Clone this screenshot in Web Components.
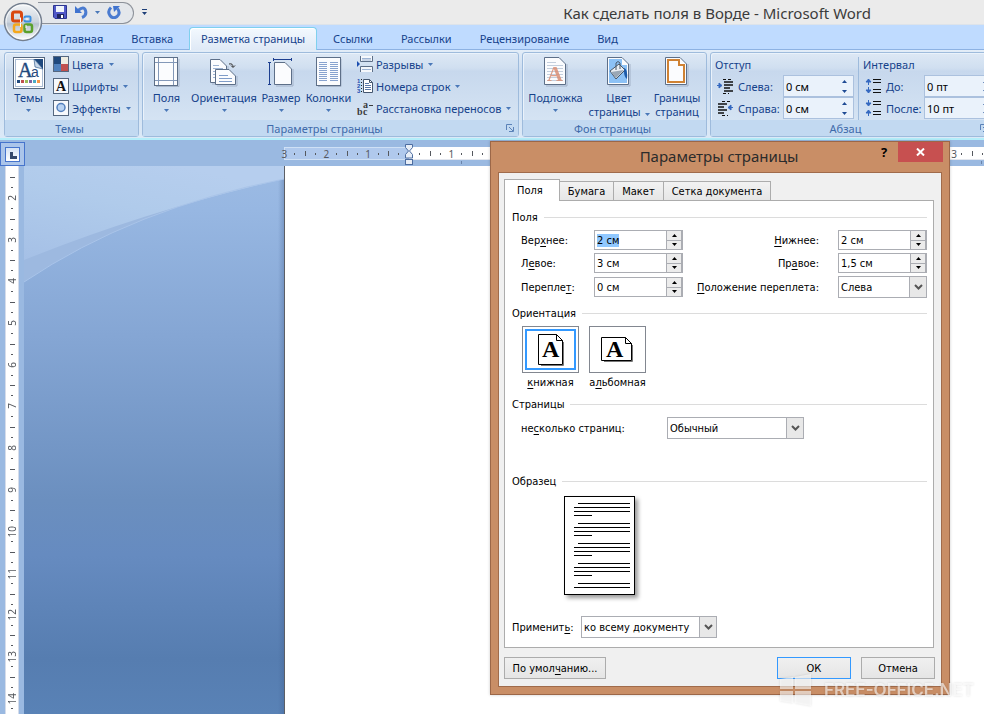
<!DOCTYPE html>
<html lang="ru">
<head>
<meta charset="utf-8">
<title>Как сделать поля в Ворде - Microsoft Word</title>
<style>
    html, body {
        margin: 0;
        height: 100%;
    }
    body {
        overflow: hidden;
        font-family: "Noto Sans", "Open Sans", sans-serif;
        font-size: 11px;
        color: #15428b;
    }
</style>
</head>
<body>
<word-window></word-window>

<script>
// ---------- icons ----------
const doc = (w, h, extra) => `
    <path d="M${w + 1} 7V${h + 1}H2" fill="none" stroke="#8d9bb0" opacity=".6"/>
    <path d="M.5.5H${w - 7}L${w - .5} 7V${h - .5}H.5Z" fill="#fbfcfe" stroke="#5d6f88"/>
    <path d="M${w - 7}.5V7H${w - .5}" fill="#dce6f3" stroke="#5d6f88"/>${extra}`;

const icons = {
    themes: `<svg width="32" height="32"><rect x=".5" y=".5" width="31" height="31" fill="#fff" stroke="#55677f"/>
        <rect x="2.500" y="2.500" width="27" height="27" fill="#fff" stroke="#a9bbd3"/>
        <path d="M21 2h9v10z" fill="#1f497d"/><path d="M21 2l1 8 8 2z" fill="#c9d8ea" stroke="#1f497d" stroke-width=".6"/>
        <text x="5" y="20" font-family="Liberation Serif" font-size="20" fill="#1f497d" stroke="#1f497d" stroke-width=".4">A</text>
        <text x="18" y="20" font-family="Liberation Sans" font-size="14" fill="#1f497d">a</text>
        <g><path d="M4 23h3v3H4z" fill="#1f497d"/><path d="M8 23h3v3H8z" fill="#c0504d"/><path d="M12 23h3v3h-3z" fill="#9bbb59"/>
        <path d="M16 23h3v3h-3z" fill="#8064a2"/><path d="M20 23h3v3h-3z" fill="#4bacc6"/><path d="M24 23h3v3h-3z" fill="#f79646"/></g></svg>`,
    colors: `<svg width="16" height="16"><rect x=".5" y=".5" width="15" height="15" fill="#fff" stroke="#55677f"/>
        <path d="M1 1h7v7H1z" fill="#1f497d"/><path d="M8 1h7v7H8z" fill="#eeece1"/><path d="M1 8h7v7H1z" fill="#4f81bd"/><path d="M8 8h7v7H8z" fill="#c0504d"/></svg>`,
    fonts: `<svg width="16" height="16"><rect x=".5" y=".5" width="15" height="15" fill="#f7f9fc" stroke="#55677f"/>
        <text x="3" y="13" font-family="Liberation Serif" font-size="14" font-weight="bold" fill="#111">A</text></svg>`,
    effects: `<svg width="16" height="16"><rect x=".5" y=".5" width="15" height="15" fill="#f7f9fc" stroke="#55677f"/>
        <circle cx="8" cy="7.500" r="4" fill="#b9d3f3" stroke="#5480bd" stroke-width="1.500"/></svg>`,
    margins: `<svg width="26" height="30"><path d="M2 29.500h23V2" fill="none" stroke="#8d9bb0" opacity=".6"/>
        <rect x=".5" y=".5" width="23" height="28" fill="#fbfcfe" stroke="#5d6f88"/>
        <path d="M4.500 1v27M19.500 1v27M1 5.500h22M1 23.500h22" stroke="#8398b8" fill="none"/></svg>`,
    orientation: `<svg width="30" height="32"><g transform="translate(1 2)">${doc(17, 24, '<path d="M3 6.500h6M3 9.500h10M3 12.500h8M3 15.500h6M3 18.500h6" stroke="#9db3d3"/>')}</g>
        <g transform="translate(6 12)">${doc(21, 16, '<path d="M4 6.500h9M4 9.500h13M4 12.500h13" stroke="#7f9cc8"/>')}</g>
        <path d="M20 7q4-1 4 3m-2-1.500l2 2 2-2" fill="none" stroke="#333"/></svg>`,
    size: `<svg width="26" height="30"><path d="M5.500 2.500h18M5.500 1v3M23.500 1v3" stroke="#1d3f8f" fill="none"/>
        <path d="M1.500 5.500v22M0 5.500h3M0 27.500h3" stroke="#1d3f8f" fill="none"/><g transform="translate(6 5)">${doc(18, 23, '')}</g></svg>`,
    columns: `<svg width="26" height="30"><path d="M2 29.500h23V2" fill="none" stroke="#8d9bb0" opacity=".6"/>
        <rect x=".5" y=".5" width="24" height="28" fill="#fbfcfe" stroke="#5d6f88"/>
        <path d="M3 5.500h8M3 7.500h8M3 9.500h8M3 11.500h8M3 13.500h8M3 15.500h8M3 17.500h8M3 19.500h8M3 21.500h8M3 23.500h8M14 5.500h8M14 7.500h8M14 9.500h8M14 11.500h8M14 13.500h8M14 15.500h8M14 17.500h8M14 19.500h8M14 21.500h8M14 23.500h8" stroke="#88a3cf"/></svg>`,
    breaks: `<svg width="17" height="17"><path d="M3.500 0v5.500h12V0M3.500 16v-5.500h12V16" fill="#f5f8fc" stroke="#5d6f88"/>
        <path d="M5 2.500h9M5 4h9M5 13.500h9" stroke="#9db3d3"/><path d="M0 5l3 3-3 3z" fill="#1d4fb0"/></svg>`,
    lines: `<svg width="17" height="17"><g font-family="Liberation Sans" font-size="6" font-weight="bold" fill="#1d4fb0"><text x="0" y="5">1</text><text x="0" y="10">2</text><text x="0" y="15">3</text></g>
        <path d="M4.500 1v14" stroke="#222" stroke-dasharray="1 2"/><path d="M6.500 1.500h6l3 3V14.500H6.500z" fill="#fff" stroke="#44566f"/><path d="M12.500 1.500v3h3" fill="none" stroke="#44566f"/>
        <path d="M8 5.500h4M8 7.500h6M8 9.500h6M8 11.500h6" stroke="#5a78a8"/></svg>`,
    hyphen: `<svg width="17" height="17"><g font-family="Liberation Serif" font-weight="bold" font-size="10" fill="#3b3b3b"><text x="0" y="15">b</text><text x="6" y="15">c</text><text x="6" y="8">a</text></g><path d="M12 5.500h4" stroke="#3b3b3b"/></svg>`,
    watermark: `<svg width="24" height="30">${doc(22, 28, `<path d="M3 5.500h9M3 8.500h16M3 11.500h16M3 14.500h16M3 17.500h16M3 20.500h16M3 23.500h16" stroke="#c3cedd"/>
        <text x="3" y="24" font-family="Liberation Serif" font-size="22" font-weight="bold" fill="#d98f76" opacity=".85">A</text>`)}</svg>`,
    pagecolor: `<svg width="24" height="30">${doc(22, 28, '<path d="M2 2h13v6h5v18H2z" fill="#8cc1f5"/>')}
        <path d="M3 14l9-7 6 6-9 9z" fill="#e9edf2" stroke="#4a5868"/><path d="M4 15l13-2-8 8z" fill="#9aa7b5"/><path d="M9 13V6q2-3 4 0v6" fill="none" stroke="#4a5868"/>
        <path d="M17 11q4 1 3 11-3-2-3-8z" fill="#1d5aa8"/></svg>`,
    borders: `<svg width="24" height="30">${doc(22, 28, '<path d="M3 3h11v5h5v17H3z" fill="none" stroke="#cf8234" stroke-width="2"/>')}</svg>`,
    left: `<svg width="17" height="15"><path d="M6 .5h3M11 .5h3M6 14.500h3M11 14.500h1" stroke="#111"/><path d="M7 3h9M7 6h9M7 9h6M7 12h9" stroke="#111" stroke-width="1.500"/><path d="M0 6.500h4M2 4l3 2.500L2 9z" stroke="#3569c0" fill="#3569c0"/></svg>`,
    right: `<svg width="17" height="15"><path d="M5 .5h3M10 .5h3M5 14.500h3M10 14.500h1" stroke="#111"/><path d="M1 3h9M1 6h6M1 9h9M1 12h6" stroke="#111" stroke-width="1.500"/><path d="M16 6.500h-4M14 4l-3 2.500L14 9z" stroke="#3569c0" fill="#3569c0"/></svg>`,
    before: `<svg width="17" height="17"><path d="M8 1.500h8M8 4.500h8M8 11.500h8M8 14.500h8" stroke="#111"/><path d="M3.500 1v6M1 4l2.500-3L6 4zM3.500 9v6M1 12l2.500 3L6 12z" stroke="#3569c0" fill="#3569c0"/></svg>`,
    after: `<svg width="17" height="17"><path d="M8 1.500h8M8 4.500h8M8 11.500h8M8 14.500h8" stroke="#111"/><path d="M3.500 0v5M1 3l2.500 3L6 3zM3.500 11v5M1 13l2.500-3L6 13z" stroke="#3569c0" fill="#3569c0"/></svg>`,
    portrait: `<svg width="27" height="33"><g transform="translate(1 1)"><path d="M25.500 8v23.500H3" fill="none" stroke="#777"/><path d="M.5.500h18l6 6v24H.5z" fill="#fff" stroke="#000"/><path d="M18.500.500v6h6z" fill="#fff" stroke="#000"/>
        <text x="4" y="23" font-family="Liberation Serif" font-size="24" font-weight="bold" fill="#000">A</text></g></svg>`,
    landscape: `<svg width="33" height="26"><path d="M31.500 8v16.500H3" fill="none" stroke="#777"/><path d="M.5.500h24l6 6v17H.5z" fill="#fff" stroke="#000"/><path d="M24.500.500v6h6z" fill="#fff" stroke="#000"/>
        <text x="5" y="20" font-family="Liberation Serif" font-size="24" font-weight="bold" fill="#000">A</text></svg>`,
    office: `<svg width="42" height="42"><defs><linearGradient id="ball" x2="0" y2="1"><stop stop-color="#f4f6f8"/><stop offset=".5" stop-color="#cbd3dd"/><stop offset=".55" stop-color="#b7c2cf"/><stop offset="1" stop-color="#fff"/></linearGradient></defs>
        <circle cx="21" cy="21" r="18.500" fill="url(#ball)" stroke="#747f8f" stroke-width="1.500"/><circle cx="21" cy="21" r="17" fill="none" stroke="#fff" opacity=".8"/>
        <g fill="none" stroke-linejoin="round"><rect x="10.500" y="11" width="9" height="9" rx="2" stroke="#d9480f" stroke-width="3"/><rect x="22.500" y="15.500" width="6" height="5" rx="1" stroke="#3d8fe0" stroke-width="2"/>
        <rect x="12" y="23.500" width="7.500" height="7.500" rx="2" stroke="#f5a81c" stroke-width="2.500"/><rect x="22.500" y="23.500" width="7.500" height="7.500" rx="2" stroke="#5aa02c" stroke-width="2.500"/></g>
        <path d="M18.500 16.500v5M22 18h4M18.500 22v4M24 24v3" fill="none" stroke="#fff"/></svg>`,
    save: `<svg width="14" height="14"><path d="M.5.5h13v13H2l-1.500-1.500z" fill="#5058c8" stroke="#2b3590"/><path d="M3 1h8v6H3z" fill="#eef3fb"/><path d="M4 9h7v4H4z" fill="#20265e"/><path d="M8 10h2v3H8z" fill="#fff"/></svg>`,
    undo: `<svg width="14" height="14"><path d="M4 5.500q6-5 7.500 0T8 12.500" fill="none" stroke="#4a7bd0" stroke-width="3"/><path d="M1 1v7h7z" fill="#3f73cf"/></svg>`,
    redo: `<svg width="14" height="14"><path d="M4 2.500q-4 4-1 8t7 1 .5-8" fill="none" stroke="#4a7bd0" stroke-width="3"/><path d="M6 1h7L7 7z" fill="#3f73cf"/></svg>`,
    caret: `<svg width="5" height="3"><path d="M0 0h5L2.500 3z" fill="#4a78b8"/></svg>`,
    more: `<svg width="5" height="6"><path d="M0 0h5v1H0zM0 3h5L2.500 6z" fill="#1e3f78"/></svg>`,
    launcher: `<svg width="8" height="8"><path d="M.5 6V.5H6M3 3l4 4M7.500 3v4.500H3" fill="none" stroke="#5b82b8"/></svg>`,
    chevron: `<svg width="9" height="6"><path d="M1 1l3.500 3.500L8 1" fill="none" stroke="#555" stroke-width="2"/></svg>`,
    up: `<svg width="5" height="3"><path d="M2.500 0L5 3H0z" fill="currentColor"/></svg>`,
    down: `<svg width="5" height="3"><path d="M0 0h5L2.500 3z" fill="currentColor"/></svg>`
};

// ---------- base ----------
class BaseElement extends HTMLElement {
    constructor() {
        super();
        this.attachShadow({mode: "open"});
    }
    attr(name) {
        return this.getAttribute(name) || "";
    }
    getTemplate() {
        const template = document.createElement("template");
        template.innerHTML = `<style>
            * { box-sizing: border-box; }
            button, input, select { font: inherit; color: inherit; margin: 0; padding: 0; border: 0; background: none; border-radius: 0; outline: none; }
            svg { display: block; flex: none; }
            ${this.getStyles()}
        </style>${this.getMarkup()}`;
        return template;
    }
    connectedCallback() {
        this.shadowRoot.appendChild(this.getTemplate().content.cloneNode(true));
    }
}

// ---------- ribbon parts ----------
class RibbonGroup extends BaseElement {
    getStyles() {
        return `
            :host {
                display: flex;
                flex-direction: column;
                border: 1px solid #9ebbdc;
                border-radius: 3px;
                background: linear-gradient(#dde8f5, #d0dff0 18%, #c7d8ed 22%, #d9e7f5);
                box-shadow: inset 1px 1px 0 #eaf2fb;
            }
            .items { display: flex; flex: 1; }
            .caption {
                display: flex;
                height: 16px;
                align-items: center;
                background: #c2d9f1;
                color: #3e6aaa;
                padding-right: 4px;
            }
            .caption span { flex: 1; text-align: center; }
        `;
    }
    getMarkup() {
        return `
            <div class="items"><slot></slot></div>
            <div class="caption"><span>${this.attr("caption")}</span>
            ${this.hasAttribute("launcher") ? `<button aria-label="Открыть окно">${icons.launcher}</button>` : ""}</div>
        `;
    }
}
customElements.define("ribbon-group", RibbonGroup);

class RibbonButton extends BaseElement {
    getStyles() {
        return `
            :host { display: block; }
            button {
                display: flex;
                flex-direction: column;
                align-items: center;
                width: 100%;
                padding-top: 4px;
                line-height: 14px;
            }
            .icon { display: flex; height: 34px; align-items: flex-start; }
            .text { white-space: nowrap; }
            .arrow { display: flex; height: 10px; align-items: center; }
            .arrow.inline { display: inline-flex; margin-left: 4px; height: 8px; }
        `;
    }
    getMarkup() {
        const second = this.attr("second");
        const arrow = !this.hasAttribute("plain");
        return `
            <button>
                <span class="icon">${icons[this.attr("icon")]}</span>
                <span class="text">${this.attr("label")}</span>
                ${second ? `<span class="text">${second}${arrow ? `<span class="arrow inline">${icons.caret}</span>` : ""}</span>`
                    : `<span class="arrow">${icons.caret}</span>`}
            </button>
        `;
    }
}
customElements.define("ribbon-button", RibbonButton);

class RibbonItem extends BaseElement {
    getStyles() {
        return `
            :host { display: block; }
            button { display: flex; align-items: center; height: 22px; white-space: nowrap; }
            .icon { width: 19px; }
            .text { margin-right: 5px; }
        `;
    }
    getMarkup() {
        return `<button><span class="icon">${icons[this.attr("icon")]}</span><span class="text">${this.attr("label")}</span>${icons.caret}</button>`;
    }
}
customElements.define("ribbon-item", RibbonItem);

class RibbonSpin extends BaseElement {
    getStyles() {
        return `
            :host { display: flex; height: 22px; align-items: center; }
            .icon { width: 23px; padding-left: 2px; }
            label { width: var(--label-width, 45px); }
            .box {
                display: flex;
                width: 71px;
                height: 22px;
                border: 1px solid #abc1de;
                background: #eaf2fb;
                color: #000;
            }
            input { flex: 1; min-width: 0; padding-left: 2px; }
            .arrows { display: flex; flex-direction: column; width: 17px; color: #1e4a94; }
            .arrows button { flex: 1; display: flex; align-items: center; justify-content: center; }
        `;
    }
    getMarkup() {
        return `
            <span class="icon">${icons[this.attr("icon")]}</span>
            <label for="value">${this.attr("label")}</label>
            <span class="box">
                <input id="value" value="${this.attr("value")}">
                <span class="arrows"><button aria-label="Больше">${icons.up}</button><button aria-label="Меньше">${icons.down}</button></span>
            </span>
        `;
    }
}
customElements.define("ribbon-spin", RibbonSpin);

// ---------- top of the window ----------
class WordHeader extends BaseElement {
    getStyles() {
        return `
            :host { display: block; position: relative; }
            .title {
                display: flex;
                align-items: center;
                height: 25px;
                background: #ebebeb;
                border-bottom: 1px solid #dde3ea;
            }
            .quick {
                display: flex;
                align-items: center;
                height: 22px;
                margin: 2px 0 0 38px;
                padding: 0 12px 2px 15px;
                gap: 7px;
                border: 1px solid #8c9199;
                border-left: 0;
                border-radius: 0 11px 11px 0;
                background: #e4e7eb;
            }
            .more { margin-left: 8px; }
            h1 {
                flex: 1;
                margin: 0;
                padding: 2px 113px 0 0;
                text-align: right;
                font-size: 15px;
                line-height: 20px;
                font-weight: normal;
                color: #3b3b3b;
                white-space: nowrap;
            }
            .orb { position: absolute; left: 2px; top: 1px; z-index: 1; }
            nav {
                display: flex;
                gap: 4px;
                height: 25px;
                padding: 2px 0 0 48px;
                background: #bfdbff;
                border-bottom: 1px solid #8db2e3;
            }
            nav button { padding: 0 11px 1px; border: 1px solid transparent; border-bottom: 0; height: 23px; white-space: nowrap; }
            nav button[aria-selected=true] {
                border-color: #7fd0ee;
                border-radius: 4px 4px 0 0;
                background: linear-gradient(#f3f9fe, #dfe9f6);
                box-shadow: inset 1px 1px #fff;
            }
        `;
    }
    getMarkup() {
        const tabs = ["Главная", "Вставка", "Разметка страницы", "Ссылки", "Рассылки", "Рецензирование", "Вид"];
        return `
            <button class="orb" aria-label="Office">${icons.office}</button>
            <div class="title">
                <div class="quick">
                    <button aria-label="Сохранить">${icons.save}</button>
                    <button aria-label="Отменить">${icons.undo}</button>
                    <button aria-label="Список отмены">${icons.caret}</button>
                    <button aria-label="Повторить">${icons.redo}</button>
                </div>
                <button class="more" aria-label="Настройка панели">${icons.more}</button>
                <h1>Как сделать поля в Ворде - Microsoft Word</h1>
            </div>
            <nav role="tablist">
                ${tabs.map((tab, i) => `<button role="tab" aria-selected="${i === 2}">${tab}</button>`).join("")}
            </nav>
        `;
    }
}
customElements.define("word-header", WordHeader);

class WordRibbon extends BaseElement {
    getStyles() {
        return `
            :host {
                display: flex;
                gap: 3px;
                height: 90px;
                padding: 2px 0 1px 4px;
                overflow: hidden;
                background: linear-gradient(#e3edf8, #cbdcf0 25%, #dbe9f7);
                border-bottom: 2px solid #b4eefa;
            }
            ribbon-group { flex: none; }
            .themes { width: 135px; }
            .setup { width: 377px; }
            .back { width: 185px; }
            .para { width: 283px; }
            .themes .list { padding-left: 1px; }
            .setup .list { padding-left: 4px; }
            .para-col h2 { margin: 0; height: 22px; line-height: 23px; font-size: 11px; font-weight: normal; }
            .indent { padding-left: 4px; }
            .spacing { --label-width: 38px; margin-top: 4px; padding-left: 4px; margin-left: 4px; border-left: 1px solid #9ebbdc; }
            .spacing h2 { height: 18px; line-height: 15px; }
        `;
    }
    getMarkup() {
        return `
            <ribbon-group class="themes" caption="Темы">
                <ribbon-button icon="themes" label="Темы" style="width:47px"></ribbon-button>
                <div class="list">
                    <ribbon-item icon="colors" label="Цвета"></ribbon-item>
                    <ribbon-item icon="fonts" label="Шрифты"></ribbon-item>
                    <ribbon-item icon="effects" label="Эффекты"></ribbon-item>
                </div>
            </ribbon-group>
            <ribbon-group class="setup" caption="Параметры страницы" launcher>
                <ribbon-button icon="margins" label="Поля" style="width:47px"></ribbon-button>
                <ribbon-button icon="orientation" label="Ориентация" style="width:68px"></ribbon-button>
                <ribbon-button icon="size" label="Размер" style="width:46px"></ribbon-button>
                <ribbon-button icon="columns" label="Колонки" style="width:49px"></ribbon-button>
                <div class="list">
                    <ribbon-item icon="breaks" label="Разрывы"></ribbon-item>
                    <ribbon-item icon="lines" label="Номера строк"></ribbon-item>
                    <ribbon-item icon="hyphen" label="Расстановка переносов"></ribbon-item>
                </div>
            </ribbon-group>
            <ribbon-group class="back" caption="Фон страницы">
                <ribbon-button icon="watermark" label="Подложка" style="width:65px"></ribbon-button>
                <ribbon-button icon="pagecolor" label="Цвет" second="страницы" style="width:62px"></ribbon-button>
                <ribbon-button icon="borders" label="Границы" second="страниц" plain style="width:54px"></ribbon-button>
            </ribbon-group>
            <ribbon-group class="para" caption="Абзац" launcher>
                <div class="para-col indent">
                    <h2>Отступ</h2>
                    <ribbon-spin icon="left" label="Слева:" value="0 см"></ribbon-spin>
                    <ribbon-spin icon="right" label="Справа:" value="0 см"></ribbon-spin>
                </div>
                <div class="para-col spacing">
                    <h2>Интервал</h2>
                    <ribbon-spin icon="before" label="До:" value="0 пт"></ribbon-spin>
                    <ribbon-spin icon="after" label="После:" value="10 пт"></ribbon-spin>
                </div>
            </ribbon-group>
        `;
    }
}
customElements.define("word-ribbon", WordRibbon);

// ---------- rulers ----------
// every centimetre is one cell: number, dot, half mark, dot
const rulerCells = numbers => numbers.map(n => `<div class="cell"><b>${n}</b><i></i><s></s><i></i></div>`).join("");

class RulerTop extends BaseElement {
    getStyles() {
        return `
            :host { display: flex; height: 25px; background: #9ab9e1; color: #55585e; font-size: 10px; }
            .corner {
                width: 25px;
                height: 24px;
                border: 1px solid #4674cc;
                background: #abc5ea;
                display: grid;
                place-items: center;
                margin-top: 1px;
            }
            .corner svg { border: 1px solid #4674cc; background: linear-gradient(#d5e2f4, #fff); }
            .track { flex: 1; min-width: 0; overflow: hidden; display: grid; grid-template: 19px 6px / 1fr; }
            .band, .cells { grid-area: 1 / 1; display: flex; align-self: end; height: 13px; }
            .band { margin-left: 259px; }
            .outside { flex: 0 0 125px; background: #b0c9ed; border: 1px solid #cfe0f5; border-right: 0; }
            .inside { flex: 1; background: #fff; border-bottom: 1px solid #e2e6ee; }
            .cells { margin-left: 254px; overflow: hidden; }
            .cell { flex: 0 0 42px; display: grid; grid-template-columns: repeat(4, minmax(0, 1fr)); place-items: center; }
            .cell:nth-child(3n) { flex-basis: 41px; }
            .cell b { font-weight: normal; line-height: 12px; }
            .cell i { width: 1px; height: 2px; background: #55585e; }
            .cell s { width: 1px; height: 5px; background: #55585e; }
            .marker { grid-area: 1 / 1 / 3 / 2; margin: 2px 0 0 379px; }
            .stops { grid-area: 2 / 1; margin-left: 385px; height: 3px; margin-top: 1px;
                background: repeating-linear-gradient(90deg, transparent 0 51px, #6a84ab 51px 52px); }
        `;
    }
    getMarkup() {
        // the dialog covers the marks from 2 to 12
        const covered = Array(11).fill("");
        return `
            <button class="corner" aria-label="Табуляция"><svg width="15" height="15"><path d="M4 4h3v4h4v3H4z" fill="#34486b"/></svg></button>
            <div class="track">
                <div class="band"><div class="outside"></div><div class="inside"></div></div>
                <div class="cells">${rulerCells([3, 2, 1, "", 1, ...covered, 13])}</div>
                <div class="stops"></div>
                <svg class="marker" width="10" height="23"><path d="M1.500 1.500h7v3L5.500 8l3 3.500V15h-7v-3.500l3-3.500-3-3.500z" fill="#e8eef7" stroke="#4d6da0"/><rect x="1.500" y="16.500" width="7" height="5" fill="#e8eef7" stroke="#4d6da0"/></svg>
            </div>
        `;
    }
}
customElements.define("ruler-top", RulerTop);

class RulerSide extends BaseElement {
    getStyles() {
        return `
            :host {
                flex: 0 0 24px;
                overflow: hidden;
                padding: 0 5px;
                background: #9ab9e1;
                color: #55585e;
                font-size: 10px;
            }
            .cells {
                display: flex;
                flex-direction: column;
                width: 14px;
                height: 100%;
                overflow: hidden;
                background: #fff;
                border: solid #d5dcea;
                border-width: 0 1px;
            }
            .cell { flex: 0 0 42px; min-height: 0; display: grid; grid-template-rows: repeat(4, minmax(0, 1fr)); place-items: center; }
            .cell:nth-child(3n) { flex-basis: 41px; }
            .cell:first-child { flex-basis: 27px; padding-top: 6px; grid-template-rows: 1fr 1fr; }
            .cell b { font-weight: normal; writing-mode: vertical-rl; transform: rotate(180deg); line-height: 12px; }
            .cell i { width: 2px; height: 1px; background: #55585e; }
            .cell s { width: 5px; height: 1px; background: #55585e; }
        `;
    }
    getMarkup() {
        return `<div class="cells"><div class="cell"><s></s><i></i></div>${rulerCells([2, 3, 4, 5, 6, 7, 8, 9, 10, 11, 12, 13, 14])}</div>`;
    }
}
customElements.define("ruler-side", RulerSide);

// ---------- document area ----------
class WordDesk extends BaseElement {
    getStyles() {
        return `
            :host { display: flex; flex: 1; min-height: 0; }
            .desk {
                flex: 0 0 261px;
                border-right: 1px solid #5c5f66;
                background: linear-gradient(90deg, transparent 254px, rgba(60, 90, 140, .3)),
                    linear-gradient(#9cbbe4, #97b7e2 8%, #85a6d4 31%, #6b8fbf 61%, #668bc0 71%, #567db0 90%, #5982b6);
            }
            .paper { flex: 1; background: #fff; }
        `;
    }
    getMarkup() {
        return `
            <ruler-side></ruler-side>
            <div class="desk">
                <svg width="260" height="120">
                    <defs><linearGradient id="sky" x1="0" y1="1" x2=".6" y2="0"><stop stop-color="#a5c0e6"/><stop offset=".6" stop-color="#b0cbeb"/><stop offset="1" stop-color="#b6ceee"/></linearGradient></defs>
                    <path d="M0 0H260V13Q110 42 0 116Z" fill="#9db9e0"/>
                    <path d="M0 0H260V13Q128 43 0 94Z" fill="url(#sky)"/>
                    <path d="M0 116Q110 42 260 13" fill="none" stroke="#a9c4e9"/>
                </svg>
            </div>
            <div class="paper"></div>
        `;
    }
}
customElements.define("word-desk", WordDesk);

// ---------- dialog parts ----------
class FieldSection extends BaseElement {
    getStyles() {
        return `
            :host { display: block; }
            .head { display: flex; align-items: center; gap: 6px; height: 16px; margin-bottom: 5px; }
            .head::after { content: ""; flex: 1; height: 1px; background: #dcdcdc; }
            .body { padding-left: 9px; }
        `;
    }
    getMarkup() {
        return `<div class="head">${this.attr("caption")}</div><div class="body"><slot></slot></div>`;
    }
}
customElements.define("field-section", FieldSection);

class SpinField extends BaseElement {
    getStyles() {
        return `
            :host { display: flex; align-items: center; }
            label { flex: 0 0 var(--label-width, auto); margin-right: var(--label-gap, 0); }
            u { text-underline-offset: 2px; }
            .box { display: flex; width: 89px; height: 20px; border: 1px solid #abadb3; background: #fff; }
            input { flex: 1; min-width: 0; padding-left: 2px; }
            input::selection { background: #90c8ff; color: #000; }
            .arrows { display: flex; flex-direction: column; width: 16px; border: 1px solid #abadb3; border-width: 0 1px; }
            .arrows button { flex: 1; display: flex; align-items: center; justify-content: center; background: #ececec; }
            .arrows button + button { border-top: 1px solid #abadb3; }
        `;
    }
    getMarkup() {
        return `
            <label for="value"><slot></slot></label>
            <span class="box">
                <input id="value" value="${this.attr("value")}">
                <span class="arrows"><button aria-label="Больше">${icons.up}</button><button aria-label="Меньше">${icons.down}</button></span>
            </span>
        `;
    }
    connectedCallback() {
        super.connectedCallback();
        if (this.hasAttribute("selected")) {
            const input = this.shadowRoot.querySelector("input");
            input.focus();
            input.select();
        }
    }
}
customElements.define("spin-field", SpinField);

class SelectField extends BaseElement {
    getStyles() {
        return `
            :host { display: flex; align-items: center; }
            label { flex: 0 0 var(--label-width, auto); margin-right: var(--label-gap, 0); white-space: nowrap; }
            .box { position: relative; width: var(--box-width, 89px); height: 22px; }
            select { appearance: none; width: 100%; height: 22px; padding-left: 2px; border: 1px solid #abadb3; background: #fff; }
            .drop {
                position: absolute;
                right: 0;
                top: 0;
                display: grid;
                place-items: center;
                width: 18px;
                height: 22px;
                border: 1px solid #abadb3;
                background: #e8e8e8;
                pointer-events: none;
            }
        `;
    }
    getMarkup() {
        return `
            <label for="value"><slot></slot></label>
            <span class="box">
                <select id="value"><option>${this.attr("value")}</option></select>
                <span class="drop">${icons.chevron}</span>
            </span>
        `;
    }
}
customElements.define("select-field", SelectField);

class OrientationPicker extends BaseElement {
    getStyles() {
        return `
            :host { display: flex; gap: 10px; margin-left: 1px; }
            label { display: flex; flex-direction: column; align-items: center; width: 57px; white-space: nowrap; line-height: 12px; }
            input { appearance: none; position: absolute; }
            .card { display: grid; place-items: center; width: 57px; height: 47px; margin-bottom: 4px; border: 1px solid #828790; }
            input:checked + .card { outline: 2px solid #3399ff; outline-offset: -5px; }
            u { text-underline-offset: 2px; }
        `;
    }
    getMarkup() {
        return `
            <label><input type="radio" name="orientation" checked><span class="card">${icons.portrait}</span><span><u>к</u>нижная</span></label>
            <label><input type="radio" name="orientation"><span class="card">${icons.landscape}</span><span>а<u>л</u>ьбомная</span></label>
        `;
    }
}
customElements.define("orientation-picker", OrientationPicker);

class PageDialog extends BaseElement {
    getStyles() {
        return `
            :host {
                display: block;
                width: 460px;
                padding: 0 7px 7px;
                border: 1px solid #9c6748;
                background: #c98e66;
                box-shadow: 0 0 3px rgba(0, 0, 0, .2);
                color: #000;
                font-family: "DejaVu Sans Condensed", "Noto Sans", sans-serif;
                font-size: 11px;
            }
            .title {
                display: flex;
                height: 30px;
                align-items: flex-start;
                color: #000;
                font-family: "Noto Sans", sans-serif;
            }
            .title h2 { flex: 1; margin: 0; padding-left: 70px; text-align: center; font-size: 15px; line-height: 28px; font-weight: normal; color: #2b2b2b; }
            .help { width: 28px; height: 20px; font-size: 13px; font-weight: bold; }
            .close { display: grid; place-items: center; width: 45px; height: 20px; margin-right: -1px; background: #c75050; }
            .client { padding: 6px 7px 7px 5px; border: 1px solid #a06b4b; background: #f0f0f0; }
            .tabs { display: flex; align-items: flex-end; height: 21px; }
            .tabs button { height: 19px; margin-right: -1px; padding: 0 8px; border: 1px solid #acacac; border-bottom: 0; background: linear-gradient(#f2f2f2, #e6e6e6); white-space: nowrap; }
            .tabs button[aria-selected=true] { position: relative; height: 22px; margin-bottom: -1px; padding: 0 16px 0 12px; background: #fff; }
            .sheet { padding: 8px 6px 9px 7px; border: 1px solid #acacac; background: #fff; }
            .fields { display: grid; grid-template-columns: auto auto; grid-template-rows: 20px 20px 22px; justify-content: space-between; gap: 3px 0; }
            .fields > :nth-child(odd) { --label-width: 73px; }
            .fields > :nth-child(even) { justify-self: end; --label-gap: 19px; }
            field-section { margin-bottom: 7px; }
            .pages { --label-width: 146px; --box-width: 137px; margin-bottom: 34px; }
            .apply { --label-width: 69px; --box-width: 136px; }
            .preview { display: block; margin: 7px 0 0 43px; filter: drop-shadow(3px 3px 2px rgba(0, 0, 0, .4)); }
            .sample { margin-bottom: 21px; }
            .buttons { display: flex; gap: 10px; margin-top: 9px; margin-right: -1px; }
            .buttons button { width: 74px; height: 22px; border: 1px solid #acacac; background: linear-gradient(#f0f0f0, #e5e5e5); }
            .buttons .default { width: 102px; margin-right: auto; }
            .buttons .ok { border-color: #3399ff; }
            u { text-underline-offset: 2px; }
        `;
    }
    getMarkup() {
        // sample paragraphs repeat every 20px, the last one is cut by the page end
        let lines = "";
        for (let y = 7; y < 92; y += 20) {
            lines += `M14 ${y}.5h52M10 ${y + 4}.5h56`;
            if (y < 80) {
                lines += `M10 ${y + 8}.5h56M10 ${y + 12}.5h18`;
            }
        }
        return `
            <div class="title">
                <h2>Параметры страницы</h2>
                <button class="help" aria-label="Справка">?</button>
                <button class="close" aria-label="Закрыть"><svg width="9" height="8"><path d="M1 .5l7 7M8 .5l-7 7" stroke="#fff" stroke-width="2"/></svg></button>
            </div>
            <div class="client">
                <div class="tabs" role="tablist">
                    <button role="tab" aria-selected="true">Поля</button>
                    <button role="tab">Бумага</button>
                    <button role="tab">Макет</button>
                    <button role="tab">Сетка документа</button>
                </div>
                <div class="sheet">
                    <field-section caption="Поля">
                        <div class="fields">
                            <spin-field value="2 см" selected>Вер<u>х</u>нее:</spin-field>
                            <spin-field value="2 см"><u>Н</u>ижнее:</spin-field>
                            <spin-field value="3 см">Л<u>е</u>вое:</spin-field>
                            <spin-field value="1,5 см">Пр<u>а</u>вое:</spin-field>
                            <spin-field value="0 см">Перепле<u>т</u>:</spin-field>
                            <select-field value="Слева"><u>П</u>оложение переплета:</select-field>
                        </div>
                    </field-section>
                    <field-section caption="Ориентация"><orientation-picker></orientation-picker></field-section>
                    <field-section class="pages" caption="Страницы">
                        <select-field value="Обычный">не<u>с</u>колько страниц:</select-field>
                    </field-section>
                    <field-section class="sample" caption="Образец">
                        <svg class="preview" width="71" height="99"><rect x=".5" y=".5" width="70" height="98" fill="#fff" stroke="#000"/><path d="${lines}" stroke="#000"/></svg>
                    </field-section>
                    <select-field class="apply" value="ко всему документу">Применит<u>ь</u>:</select-field>
                </div>
                <div class="buttons">
                    <button class="default">По умол<u>ч</u>анию...</button>
                    <button class="ok">ОК</button>
                    <button>Отмена</button>
                </div>
            </div>
        `;
    }
}
customElements.define("page-dialog", PageDialog);

class SiteMark extends BaseElement {
    getStyles() {
        return `
            :host {
                display: flex;
                align-items: center;
                gap: 12px;
                font: 600 17px Inter, sans-serif;
                color: rgba(255, 255, 255, .6);
                filter: drop-shadow(0 0 1px rgba(0, 0, 0, .2));
                pointer-events: none;
            }
        `;
    }
    getMarkup() {
        return `<svg width="32" height="32"><path d="M0 5l13-2v12H0zM15 3l16-3v15H15zM0 17h13v12L0 27zM15 17h16v15l-16-3z" fill="#fff" opacity=".6"/></svg><span>FREE-OFFICE.NET</span>`;
    }
}
customElements.define("site-mark", SiteMark);

class WordWindow extends BaseElement {
    getStyles() {
        return `
            :host { display: flex; flex-direction: column; height: 100vh; position: relative; overflow: hidden; background: #9ab9e1; }
            word-ribbon { margin-bottom: 1px; }
            page-dialog { position: absolute; left: 490px; top: 141px; }
            site-mark { position: absolute; right: 10px; bottom: 8px; }
        `;
    }
    getMarkup() {
        return `
            <word-header></word-header>
            <word-ribbon></word-ribbon>
            <ruler-top></ruler-top>
            <word-desk></word-desk>
            <page-dialog></page-dialog>
            <site-mark></site-mark>
        `;
    }
}
customElements.define("word-window", WordWindow);
</script>
</body>
</html>
